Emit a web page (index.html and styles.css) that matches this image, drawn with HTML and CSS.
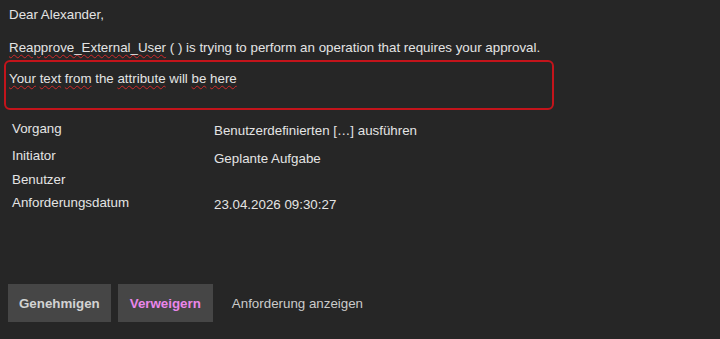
FILE: index.html
```html
<!DOCTYPE html>
<html lang="en">
<head>
    <meta charset="UTF-8">
    <title>Approval request</title>
    <link rel="stylesheet" href="styles.css">
</head>
<body>
    <div class="mail">
        <p class="greeting">Dear Alexander,</p>
        <p class="intro"><span class="typo">Reapprove_External_User</span> ( ) is trying to perform an operation that requires your approval.</p>
        <div class="note">
            <span class="typo">Your</span> <span class="typo">text</span> <span class="typo">from</span> the <span class="typo">attribute</span> will <span class="typo">be</span> <span class="typo">here</span>
        </div>
        <div class="details">
            <div class="row r1">
                <div class="label">Vorgang</div>
                <div class="value">Benutzerdefinierten […] ausführen</div>
            </div>
            <div class="row r2">
                <div class="label">Initiator</div>
                <div class="value">Geplante Aufgabe</div>
            </div>
            <div class="row r3">
                <div class="label">Benutzer</div>
                <div class="value"></div>
            </div>
            <div class="row">
                <div class="label">Anforderungsdatum</div>
                <div class="value">23.04.2026 09:30:27</div>
            </div>
        </div>
        <div class="actions">
            <button class="btn">Genehmigen</button>
            <button class="btn deny">Verweigern</button>
            <a class="link">Anforderung anzeigen</a>
        </div>
    </div>
</body>
</html>
```

FILE: styles.css
```css
body {
    margin: 0;
    background: #262626;
    color: #e4e4e4;
    font-family: "Liberation Sans", Arial, sans-serif;
    font-size: 13.33px;
    line-height: 15px;
}
.mail {
    padding: 7px 0 0 9px;
}
p {
    margin: 0;
}
.intro {
    margin-top: 18px;
}
.typo {
    text-decoration: underline wavy #d02a2a;
    text-decoration-thickness: 1px;
    text-underline-offset: 2px;
}
.note {
    width: 543px;
    margin: 5px 0 0 -5px;
    padding: 9px 0 22px 3px;
    border: 2px solid #c3141b;
    border-radius: 6px;
}
.details {
    margin-top: 11px;
    padding-left: 3px;
}
.row {
    display: flex;
}
.r1 {
    height: 27px;
}
.r2 {
    height: 24px;
}
.r3 {
    height: 23px;
}
.label {
    width: 202px;
}
.value {
    padding-top: 2px;
}
.r2 .value {
    padding-top: 3px;
}
.actions {
    display: flex;
    align-items: center;
    gap: 7px;
    margin-top: 72px;
    margin-left: -1px;
}
.btn {
    height: 38px;
    padding: 0 11px;
    border: none;
    background: #464646;
    color: #d2d2d2;
    font-family: inherit;
    font-size: 13.33px;
    font-weight: bold;
}
.btn.deny {
    padding: 0 12px;
    color: #ea86ea;
}
.link {
    margin-left: 12px;
    color: #cbcbcb;
}
```
